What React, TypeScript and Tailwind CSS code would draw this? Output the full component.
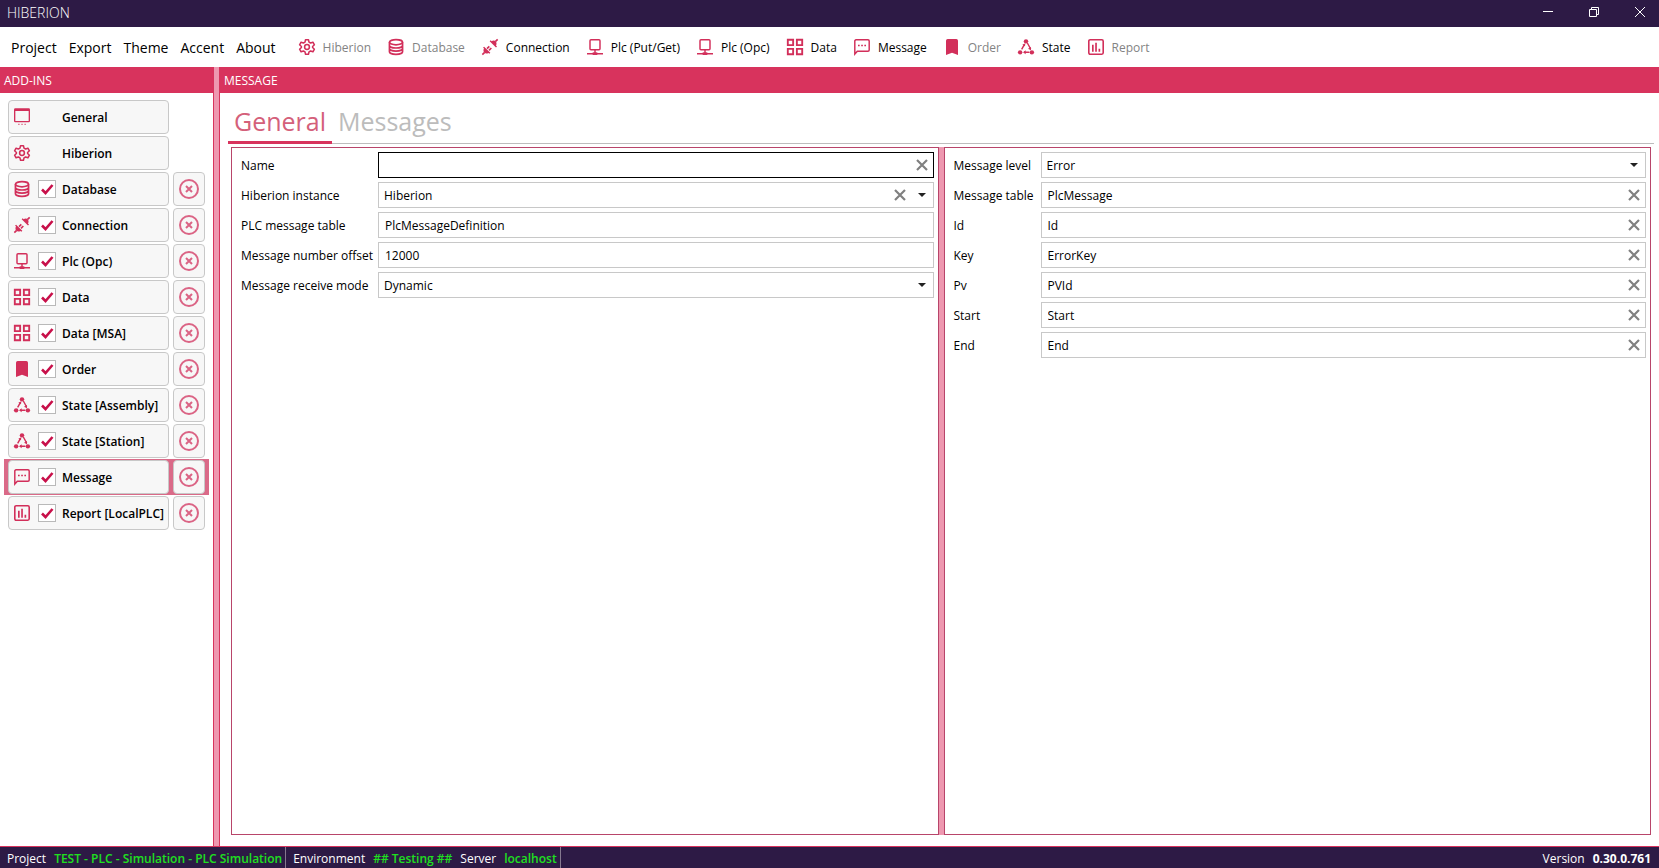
import { useState } from "react";
import type { ReactNode } from "react";

type IconName = keyof typeof icons;

// 24px grid, everything inherits currentColor
const icons = {
  general: (
    <>
      <path d="M2 -1h20a2 2 0 0 1 2 2V18a2 2 0 0 1-2 2H2a2 2 0 0 1-2-2V1a2 2 0 0 1 2-2zM2 3V18h20V3z" fillRule="evenodd" />
      <path d="M6 22h2.500v2H6zM10.800 22h2.500v2h-2.500zM15.500 22H18v2h-2.500z" opacity=".6" />
    </>
  ),
  gear: (
    <g fill="none" stroke="currentColor" strokeWidth="2.300" strokeLinejoin="round">
      <path d="M9.800 1h4.400l.8 3.600 2.400 1.400 3.500-1.200 2.200 3.900-2.700 2.500v1.600l2.700 2.500-2.200 3.900-3.500-1.200-2.400 1.400-.8 3.600H9.800L9 19.400 6.600 18l-3.500 1.200-2.200-3.900 2.700-2.500v-1.600L.9 8.700l2.200-3.900L6.600 6 9 4.600z" />
      <circle cx="12" cy="12" r="3.600" />
    </g>
  ),
  database: (
    <g fill="none" stroke="currentColor" strokeWidth="2.600">
      <ellipse cx="12" cy="4.800" rx="9.800" ry="3.900" />
      <path d="M2.200 4.800v14.400c0 2 4.200 3.900 9.800 3.900s9.800-1.900 9.800-3.900V4.800M2.200 9.600c0 2 4.200 3.900 9.800 3.900s9.800-1.900 9.800-3.900M2.200 14.400c0 2 4.200 3.900 9.800 3.900s9.800-1.900 9.800-3.900" />
    </g>
  ),
  plug: (
    <>
      <path d="M11.500 3.200 13 1.700l1.500 1.500c2-1.200 4.600-1 6.100.5s1.600 4 .4 6l1.500 1.500-1.500 1.500z" />
      <path d="m3.200 11.500 9.300 9.300-1.500 1.500-1.400-1.400c-2 1.200-4.600 1-6.100-.5s-1.700-4.100-.5-6.100l-1.400-1.400z" />
      <path d="m20 4 3.500-3.500M4 20 .5 23.500M7.500 14.500l3.500-3.500M10.500 17l3.500-3.500" fill="none" stroke="currentColor" strokeWidth="2.400" />
    </>
  ),
  plc: (
    <g fill="none" stroke="currentColor" strokeWidth="2.200">
      <rect x="4.500" y="1" width="15" height="15" rx="1.500" />
      <path d="M12 16v5M0 22h24" />
      <path d="M8.500 24v-4h7v4z" fill="currentColor" stroke="none" />
    </g>
  ),
  data: (
    <g fill="none" stroke="currentColor" strokeWidth="2.800">
      <path d="M1.200 1.200h8v8h-8zM14.800 1.200h8v8h-8zM1.200 14.800h8v8h-8zM14.800 14.800h8v8h-8z" />
    </g>
  ),
  message: (
    <>
      <path d="M1.200 22.500V3a1.800 1.800 0 0 1 1.800-1.800h18A1.800 1.800 0 0 1 22.800 3v13.500a1.800 1.800 0 0 1-1.800 1.800H5z" fill="none" stroke="currentColor" strokeWidth="2.200" />
      <path d="M6 8.500h2.500V11H6zM10.800 8.500h2.500V11h-2.500zM15.500 8.500H18V11h-2.500z" />
    </>
  ),
  order: <path d="M5.500 0h13A2.500 2.500 0 0 1 21 2.500V24l-9-3.500L3 24V2.500A2.500 2.500 0 0 1 5.500 0z" />,
  state: (
    <>
      <circle cx="12" cy="3.500" r="3.300" />
      <circle cx="3.200" cy="20" r="3.300" />
      <circle cx="20.800" cy="20" r="3.300" />
      <path d="M9.500 8.500 5.500 15.500M14 6l5 9M9 20h8" fill="none" stroke="currentColor" strokeWidth="2.200" />
      <path d="m11 6.500-.5 4.500-4-2.300zM19.500 12v5l-4.500-2.500zM11.500 17v6L7.500 20z" />
    </>
  ),
  report: (
    <>
      <rect x="1.200" y="1.200" width="21.600" height="21.600" rx="2" fill="none" stroke="currentColor" strokeWidth="2.400" />
      <path d="M6 8.500h2.500V19H6zM10.800 5.500h2.500V19h-2.500zM15.800 14.500h2.500V19h-2.500z" />
    </>
  ),
};

function Icon({ name }: { name: IconName }) {
  return (
    <svg viewBox="0 0 24 24" fill="currentColor" aria-hidden="true" className="size-4 shrink-0 overflow-visible text-[#d22f5a]">
      {icons[name]}
    </svg>
  );
}

const menus = ["Project", "Export", "Theme", "Accent", "About"];

const tools: { icon: IconName; label: string; disabled?: boolean }[] = [
  { icon: "gear", label: "Hiberion", disabled: true },
  { icon: "database", label: "Database", disabled: true },
  { icon: "plug", label: "Connection" },
  { icon: "plc", label: "Plc (Put/Get)" },
  { icon: "plc", label: "Plc (Opc)" },
  { icon: "data", label: "Data" },
  { icon: "message", label: "Message" },
  { icon: "order", label: "Order", disabled: true },
  { icon: "state", label: "State" },
  { icon: "report", label: "Report", disabled: true },
];

const addIns: { icon: IconName; label: string; fixed?: boolean }[] = [
  { icon: "general", label: "General", fixed: true },
  { icon: "gear", label: "Hiberion", fixed: true },
  { icon: "database", label: "Database" },
  { icon: "plug", label: "Connection" },
  { icon: "plc", label: "Plc (Opc)" },
  { icon: "data", label: "Data" },
  { icon: "data", label: "Data [MSA]" },
  { icon: "order", label: "Order" },
  { icon: "state", label: "State [Assembly]" },
  { icon: "state", label: "State [Station]" },
  { icon: "message", label: "Message" },
  { icon: "report", label: "Report [LocalPLC]" },
];

function TitleBar() {
  return (
    <header className="flex h-[27px] shrink-0 items-center bg-[#2d1a45] pb-[3px] text-white">
      <h1 className="flex-1 pt-0.5 pl-[7px] text-sm font-light">HIBERION</h1>
      <div className="-mr-1 flex h-full">
        <button aria-label="Minimize" className="flex h-full w-[46px] items-center justify-center">
          <svg viewBox="0 0 10 10" className="size-[10px]" stroke="currentColor" fill="none"><path d="M0 4.500h10" /></svg>
        </button>
        <button aria-label="Restore" className="flex h-full w-[46px] items-center justify-center">
          <svg viewBox="0 0 10 10" className="size-[10px]" stroke="currentColor" fill="none"><path d="M.5 2.500h7v7h-7zM2.500 2.500v-2h7v7h-2" /></svg>
        </button>
        <button aria-label="Close" className="flex h-full w-[46px] items-center justify-center">
          <svg viewBox="0 0 10 10" className="size-[10px]" stroke="currentColor" fill="none"><path d="m0 0 10 10M10 0 0 10" /></svg>
        </button>
      </div>
    </header>
  );
}

function AddInRow({ icon, label, fixed, selected, onSelect }: { icon: IconName; label: string; fixed?: boolean; selected: boolean; onSelect: () => void }) {
  return (
    <li className={`flex h-9 gap-1 px-1 py-px ${selected ? "bg-[#da6a88]" : ""}`}>
      <div className="flex w-[161px] items-center rounded border border-[#c8c8c8] bg-[#f7f7f7] pl-[5px]">
        <Icon name={icon} />
        <span className="ml-2 flex w-[18px] shrink-0">
          {!fixed && (
            <span className="relative flex">
              <input type="checkbox" defaultChecked aria-label={`Enable ${label}`} className="peer size-[18px] appearance-none border border-[#b9b9b9] bg-white" />
              <svg viewBox="0 0 18 18" className="pointer-events-none absolute inset-0 hidden size-[18px] peer-checked:block" fill="none" stroke="#c8104a" strokeWidth="2.600">
                <path d="m4 9.500 3.500 3.500L14.500 5" />
              </svg>
            </span>
          )}
        </span>
        <button onClick={onSelect} className="flex-1 pt-0.5 pl-[6px] text-left text-xs font-semibold whitespace-nowrap">{label}</button>
      </div>
      {!fixed && (
        <button aria-label={`Remove ${label}`} className="flex w-8 items-center justify-center rounded border border-[#c8c8c8] bg-[#f7f7f7] text-[#db6485]">
          <svg viewBox="0 0 20 20" className="size-5" fill="none" stroke="currentColor" strokeWidth="2">
            <circle cx="10" cy="10" r="9" />
            <path d="m7 7 6 6M13 7l-6 6" />
          </svg>
        </button>
      )}
    </li>
  );
}

function ClearButton({ label }: { label: string }) {
  return (
    <button aria-label={`Clear ${label}`} className="flex h-full w-[22px] shrink-0 items-center justify-center text-[#808080]">
      <svg viewBox="0 0 12 12" className="size-3" fill="none" stroke="currentColor" strokeWidth="2.200"><path d="m1 1 10 10M11 1 1 11" /></svg>
    </button>
  );
}

type FieldProps = { id: string; label: string; value: string; labelWidth: string; select?: boolean; clear?: boolean; active?: boolean };

function Field({ id, label, value, labelWidth, select, clear, active }: FieldProps) {
  return (
    <div className="flex h-[26px] items-center">
      <label htmlFor={id} className={`shrink-0 pt-0.5 font-medium whitespace-nowrap ${labelWidth}`}>{label}</label>
      <div className={`flex h-full min-w-0 flex-1 items-center border bg-white ${active ? "border-black" : "border-[#c8c8c8]"}`}>
        {select ? (
          <>
            <select id={id} defaultValue={value} className="h-full min-w-0 flex-1 appearance-none pt-0.5 pl-[5px] font-medium outline-none">
              <option>{value}</option>
            </select>
            {clear && <ClearButton label={label} />}
            <span className="pointer-events-none flex w-[22px] shrink-0 justify-center">
              <svg viewBox="0 0 8 4" className="h-1 w-2" fill="#222"><path d="M0 0h8L4 4z" /></svg>
            </span>
          </>
        ) : (
          <>
            <input id={id} type="text" defaultValue={value} className="h-full min-w-0 flex-1 pl-[6px] font-medium outline-none" />
            {clear && <ClearButton label={label} />}
          </>
        )}
      </div>
    </div>
  );
}

function Panel({ children }: { children: ReactNode }) {
  return <div className="flex min-w-0 flex-1 flex-col gap-1 border border-[#b8456a] py-1 pr-1 pl-[9px]">{children}</div>;
}

export default function App() {
  const [selected, setSelected] = useState("Message");

  return (
    <div className="flex h-screen flex-col overflow-hidden bg-white font-['Open_Sans','Noto_Sans',sans-serif] text-xs text-black">
      <TitleBar />

      {/* Menu and toolbar */}
      <nav className="flex h-10 shrink-0 items-center pl-[11px]">
        <div className="flex gap-3 pt-0.5 text-sm">
          {menus.map((m) => (
            <button key={m}>{m}</button>
          ))}
        </div>
        <div className="ml-[23px] flex gap-[17px]">
          {tools.map((t) => (
            <button key={t.label} disabled={t.disabled} className="flex items-center gap-2 whitespace-nowrap disabled:text-[#838383]">
              <Icon name={t.icon} />
              <span className="pt-0.5">{t.label}</span>
            </button>
          ))}
        </div>
      </nav>

      <div className="flex min-h-0 flex-1">
        {/* Add-ins */}
        <aside className="flex w-[214px] shrink-0 flex-col border-r border-[#d8335d]">
          <h2 className="flex h-[26px] shrink-0 items-center bg-[#d8335d] pt-0.5 pl-1 text-white">ADD-INS</h2>
          <ul className="mx-1 pt-[6px]">
            {addIns.map((a) => (
              <AddInRow key={a.label} {...a} selected={selected === a.label} onSelect={() => setSelected(a.label)} />
            ))}
          </ul>
        </aside>

        <div className="w-[5px] shrink-0 bg-[#ee98b0]" />

        {/* Editor */}
        <main className="flex min-w-0 flex-1 flex-col border-l border-[#d8335d]">
          <h2 className="flex h-[26px] shrink-0 items-center bg-[#d8335d] pt-0.5 pl-1 text-white">MESSAGE</h2>
          <div className="mr-[5px] ml-2 flex h-[51px] shrink-0 items-end border-b border-[#bdbdbd]">
            <button className="-mb-px h-[42px] border-b-3 border-[#d8335d] px-[6px] pb-0.5 text-[25px] leading-9 text-[#d4607a]">General</button>
            <button className="-mb-px h-[42px] border-b-3 border-transparent px-[6px] pb-0.5 text-[25px] leading-9 text-[#bcbcbc]">Messages</button>
          </div>
          <div className="mt-[3px] mr-2 mb-[11px] ml-[11px] flex min-h-0 flex-1">
            <Panel>
              <Field id="name" label="Name" value="" labelWidth="w-[137px]" clear active />
              <Field id="instance" label="Hiberion instance" value="Hiberion" labelWidth="w-[137px]" select clear />
              <Field id="plc-table" label="PLC message table" value="PlcMessageDefinition" labelWidth="w-[137px]" />
              <Field id="offset" label="Message number offset" value="12000" labelWidth="w-[137px]" />
              <Field id="mode" label="Message receive mode" value="Dynamic" labelWidth="w-[137px]" select />
            </Panel>
            <div className="w-[5px] shrink-0 bg-[#ee98b0]" />
            <Panel>
              <Field id="level" label="Message level" value="Error" labelWidth="w-[87px]" select />
              <Field id="table" label="Message table" value="PlcMessage" labelWidth="w-[87px]" clear />
              <Field id="id" label="Id" value="Id" labelWidth="w-[87px]" clear />
              <Field id="key" label="Key" value="ErrorKey" labelWidth="w-[87px]" clear />
              <Field id="pv" label="Pv" value="PVId" labelWidth="w-[87px]" clear />
              <Field id="start" label="Start" value="Start" labelWidth="w-[87px]" clear />
              <Field id="end" label="End" value="End" labelWidth="w-[87px]" clear />
            </Panel>
          </div>
        </main>
      </div>

      {/* Status bar */}
      <footer className="flex h-[22px] shrink-0 items-stretch border-t border-[#d8335d] bg-[#2d1a45] whitespace-nowrap text-white">
        <div className="flex items-center gap-2 border-r border-[#85788f] pt-0.5 pr-[3px] pl-[7px]">
          <span>Project</span>
          <b className="font-semibold text-[#1fe01f]">TEST - PLC - Simulation - PLC Simulation</b>
        </div>
        <div className="flex items-center gap-2 border-r border-[#85788f] pt-0.5 pr-[3px] pl-[7px]">
          <span>Environment</span>
          <b className="font-semibold text-[#1fe01f]">## Testing ##</b>
          <span>Server</span>
          <b className="font-semibold text-[#1fe01f]">localhost</b>
        </div>
        <div className="ml-auto flex items-center gap-2 pt-0.5 pr-2">
          <span>Version</span>
          <b>0.30.0.761</b>
        </div>
      </footer>
    </div>
  );
}
